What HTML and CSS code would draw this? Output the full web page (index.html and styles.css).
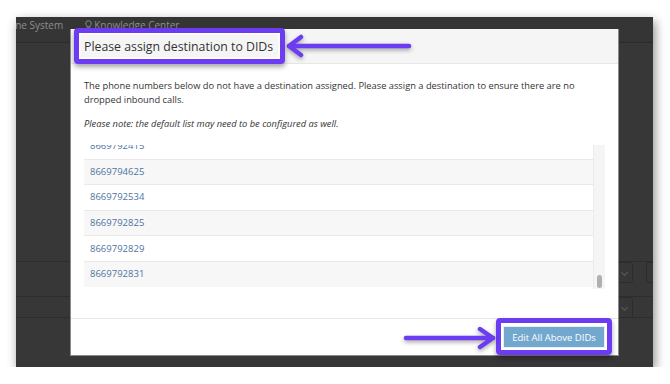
FILE: index.html
```html
<!DOCTYPE html>
<html lang="en">
<head>
<meta charset="utf-8">
<title>Please assign destination to DIDs</title>
<link rel="stylesheet" href="styles.css">
</head>
<body>
<div class="frame">
  <div class="topbar">
    <span class="nav-item nav-first">Phone System</span>
    <span class="nav-item">
      <svg class="bulb" width="7" height="10" viewBox="0 0 7 10"><path d="M3.5 0.8a2.7 2.7 0 0 0-1.6 4.9v1.3h3.2V5.7A2.7 2.7 0 0 0 3.5 0.8z" fill="none" stroke="#8e8e8e" stroke-width="1"/><path d="M2.2 8h2.6M2.6 9.2h1.8" stroke="#8e8e8e" stroke-width="0.9"/></svg>
      Knowledge Center
    </span>
  </div>
  <div class="page">
    <div class="form-row">
      <div class="sel sel-main"><span class="chev"></span></div>
      <div class="sel sel-next"></div>
    </div>
    <div class="form-row form-row-2">
      <div class="sel sel-main"><span class="chev"></span></div>
    </div>
  </div>

  <div class="modal">
    <div class="modal-header">
      <h4 class="modal-title">Please assign destination to DIDs</h4>
    </div>
    <div class="modal-body">
      <p class="intro">The phone numbers below do not have a destination assigned. Please assign a destination to ensure there are no dropped inbound calls.</p>
      <p class="note">Please note: the default list may need to be configured as well.</p>
      <div class="list">
        <div class="rows">
          <div class="row row-partial"><a>8669792415</a></div>
          <div class="row striped"><a>8669794625</a></div>
          <div class="row"><a>8669792534</a></div>
          <div class="row striped"><a>8669792825</a></div>
          <div class="row"><a>8669792829</a></div>
          <div class="row striped"><a>8669792831</a></div>
        </div>
        <div class="scrollbar"><div class="thumb"></div></div>
      </div>
    </div>
    <div class="modal-footer">
      <button class="btn-edit">Edit All Above DIDs</button>
    </div>
  </div>

  <div class="hl hl-title"></div>
  <div class="hl hl-button"></div>

  <svg class="arrow arrow-title" width="130" height="30" viewBox="0 0 130 30">
    <g fill="none" stroke="#6b3cf2" stroke-width="4.5" stroke-linecap="round" stroke-linejoin="round">
      <path d="M4 15H124"/>
      <path d="M16 6L4 15L16 24"/>
    </g>
  </svg>
  <svg class="arrow arrow-button" width="100" height="30" viewBox="0 0 100 30">
    <g fill="none" stroke="#6b3cf2" stroke-width="4.5" stroke-linecap="round" stroke-linejoin="round">
      <path d="M4 15H91"/>
      <path d="M78 6L91 15L78 24"/>
    </g>
  </svg>
</div>
</body>
</html>
```

FILE: styles.css
```css
* { box-sizing: border-box; }

html, body {
  margin: 0;
  padding: 0;
  background: #ffffff;
  font-family: "Open Sans", "DejaVu Sans", sans-serif;
}

.frame {
  position: relative;
  margin: 17px 0 0 16px;
  width: 637px;
  height: 350px;
  background: #373737;
  overflow: hidden;
  box-shadow: 2px 4px 10px rgba(0, 0, 0, 0.45);
}

.topbar {
  height: 26px;
  display: flex;
  align-items: flex-start;
  padding-top: 2px;
  gap: 22px;
  background: #353535;
  border-bottom: 1px solid #2b2b2b;
  color: #8e8e8e;
  font-size: 10px;
  line-height: 12px;
}

.nav-first { margin-left: -19px; }

.nav-item {
  display: flex;
  align-items: center;
  gap: 2px;
}

.page {
  padding-top: 218px;
}

.form-row {
  height: 35px;
  border-top: 1px solid #2d2d2d;
  display: flex;
  align-items: flex-start;
  justify-content: flex-end;
  gap: 13px;
}

.form-row-2 {
  border-bottom: 1px solid #2d2d2d;
  padding-right: 20px;
  height: 22px;
}

.sel {
  height: 21px;
  border: 1px solid #2c2c2c;
  border-radius: 3px;
  position: relative;
}

.sel-main { width: 120px; }
.sel-next { width: 20px; margin-right: -13px; }

.chev {
  position: absolute;
  right: 5px;
  top: 7px;
  width: 5px;
  height: 5px;
  border-right: 1.3px solid #5a5a5a;
  border-bottom: 1.3px solid #5a5a5a;
  transform: rotate(45deg);
}

/* modal */
.modal {
  position: absolute;
  left: 54px;
  top: 12px;
  width: 549px;
  height: 327px;
  background: #ffffff;
  border: 1px solid #8a8a8a;
  border-top: none;
  display: flex;
  flex-direction: column;
  color: #333333;
}

.modal-header {
  height: 35px;
  flex: none;
  background: #f5f5f5;
  border-bottom: 1px solid #e6e6e6;
  display: flex;
  align-items: center;
  padding: 0 13px;
}

.modal-title {
  margin: 0;
  font-size: 12.3px;
  font-weight: 400;
  color: #333;
}

.modal-body {
  flex: 1;
  padding: 15px 13px 0 13px;
  font-size: 9.3px;
  line-height: 14px;
}

.intro { margin: 0; }

.note {
  margin: 10px 0 0 0;
  font-style: italic;
  font-size: 9.3px;
}

.list {
  margin-top: 14px;
  height: 144px;
  display: flex;
  overflow: hidden;
}

.rows {
  flex: 1;
  overflow: hidden;
}

.row {
  height: 25.6px;
  display: flex;
  align-items: center;
  padding-left: 6px;
  border-top: 1px solid #e9e9e9;
}

.row-partial {
  margin-top: -12px;
  border-top: none;
}

.row.striped { background: #f7f7f7; }

.row a {
  color: #4d74a0;
  font-size: 9.5px;
}

.scrollbar {
  width: 12px;
  flex: none;
  background: #f5f5f5;
  border-left: 1px solid #ececec;
  display: flex;
  flex-direction: column;
  justify-content: flex-end;
  align-items: center;
}

.thumb {
  width: 5px;
  height: 13px;
  margin-bottom: 1px;
  border-radius: 3px;
  background: #b0b0b0;
}

.modal-footer {
  height: 37px;
  flex: none;
  border-top: 1px solid #e6e6e6;
  display: flex;
  justify-content: flex-end;
  align-items: center;
  padding-right: 13px;
}

.btn-edit {
  width: 102px;
  height: 22px;
  border: 1px solid #e8f0f6;
  background: #72a8cd;
  color: #ffffff;
  font-family: "Open Sans", "DejaVu Sans", sans-serif;
  font-size: 9.5px;
  padding: 0;
}

/* annotation overlays */
.hl {
  position: absolute;
  border: 5px solid #6b3cf2;
  border-radius: 4px;
  box-shadow: 0 3px 5px rgba(0, 0, 0, 0.35), inset 0 0 0 1.5px #ffffff;
}

.hl-title {
  left: 58px;
  top: 11px;
  width: 211px;
  height: 36px;
}

.hl-button {
  left: 480px;
  top: 301px;
  width: 116px;
  height: 37px;
}

.arrow {
  position: absolute;
  filter: drop-shadow(0 2px 2px rgba(0, 0, 0, 0.35));
}

.arrow-title {
  left: 269px;
  top: 14px;
}

.arrow-button {
  left: 386px;
  top: 306px;
}
```
